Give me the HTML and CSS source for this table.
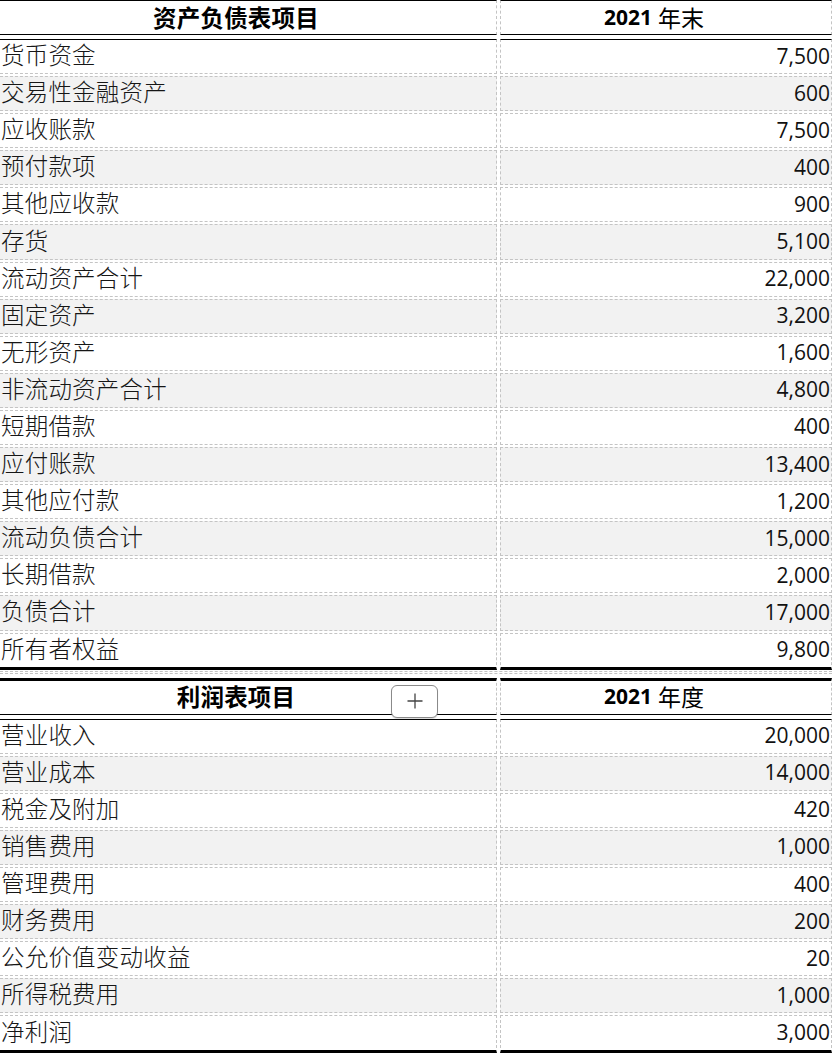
FILE: index.html
```html
<!DOCTYPE html>
<html lang="zh-CN">
<head>
<meta charset="utf-8">
<title>财务报表</title>
<link rel="stylesheet" href="styles.css">
</head>
<body>
<div class="sheet">
  <section class="tbl tbl-top">
    <div class="row head">
      <div class="cell c1"><span class="hd-cn">资产负债表项目</span></div>
      <div class="cell c2"><span class="hd-num">2021</span> <span class="hd-cn hd-light">年末</span></div>
    </div>
    <div class="rows">
      <div class="row first"><div class="cell c1">货币资金</div><div class="cell c2">7,500</div></div>
      <div class="row alt"><div class="cell c1">交易性金融资产</div><div class="cell c2">600</div></div>
      <div class="row"><div class="cell c1">应收账款</div><div class="cell c2">7,500</div></div>
      <div class="row alt"><div class="cell c1">预付款项</div><div class="cell c2">400</div></div>
      <div class="row"><div class="cell c1">其他应收款</div><div class="cell c2">900</div></div>
      <div class="row alt"><div class="cell c1">存货</div><div class="cell c2">5,100</div></div>
      <div class="row"><div class="cell c1">流动资产合计</div><div class="cell c2">22,000</div></div>
      <div class="row alt"><div class="cell c1">固定资产</div><div class="cell c2">3,200</div></div>
      <div class="row"><div class="cell c1">无形资产</div><div class="cell c2">1,600</div></div>
      <div class="row alt"><div class="cell c1">非流动资产合计</div><div class="cell c2">4,800</div></div>
      <div class="row"><div class="cell c1">短期借款</div><div class="cell c2">400</div></div>
      <div class="row alt"><div class="cell c1">应付账款</div><div class="cell c2">13,400</div></div>
      <div class="row"><div class="cell c1">其他应付款</div><div class="cell c2">1,200</div></div>
      <div class="row alt"><div class="cell c1">流动负债合计</div><div class="cell c2">15,000</div></div>
      <div class="row"><div class="cell c1">长期借款</div><div class="cell c2">2,000</div></div>
      <div class="row alt"><div class="cell c1">负债合计</div><div class="cell c2">17,000</div></div>
      <div class="row last"><div class="cell c1">所有者权益</div><div class="cell c2">9,800</div></div>
    </div>
  </section>

  <div class="spacer"></div>

  <section class="tbl tbl-bottom">
    <div class="row head">
      <div class="cell c1"><span class="hd-cn">利润表项目</span><button class="add-btn" type="button" aria-label="添加">
        <svg width="18" height="18" viewBox="0 0 18 18"><path d="M9 1.5V16.5M1.5 9H16.5" stroke="#444" stroke-width="1.3" fill="none"/></svg>
      </button></div>
      <div class="cell c2"><span class="hd-num">2021</span> <span class="hd-cn hd-light">年度</span></div>
    </div>
    <div class="rows">
      <div class="row first"><div class="cell c1">营业收入</div><div class="cell c2">20,000</div></div>
      <div class="row alt"><div class="cell c1">营业成本</div><div class="cell c2">14,000</div></div>
      <div class="row"><div class="cell c1">税金及附加</div><div class="cell c2">420</div></div>
      <div class="row alt"><div class="cell c1">销售费用</div><div class="cell c2">1,000</div></div>
      <div class="row"><div class="cell c1">管理费用</div><div class="cell c2">400</div></div>
      <div class="row alt"><div class="cell c1">财务费用</div><div class="cell c2">200</div></div>
      <div class="row"><div class="cell c1">公允价值变动收益</div><div class="cell c2">20</div></div>
      <div class="row alt"><div class="cell c1">所得税费用</div><div class="cell c2">1,000</div></div>
      <div class="row last"><div class="cell c1">净利润</div><div class="cell c2">3,000</div></div>
    </div>
  </section>
</div>
</body>
</html>
```
FILE: styles.css
```css
html, body {
  margin: 0;
  padding: 0;
  background: #fff;
}
body {
  width: 833px;
  height: 1053px;
  overflow: hidden;
  font-family: "Noto Sans CJK SC", "Noto Sans", sans-serif;
  color: #1a1a1a;
}
.sheet {
  width: 832px;
  display: flex;
  flex-direction: column;
}
.tbl {
  display: flex;
  flex-direction: column;
}
.rows {
  display: flex;
  flex-direction: column;
  gap: 2px;
}
.row {
  display: grid;
  grid-template-columns: 497px 332px;
  column-gap: 3px;
}
.cell {
  box-sizing: border-box;
  height: 35.1px;
  border: 1px dashed #c4c4c4;
  display: flex;
  align-items: center;
  white-space: nowrap;
  line-height: 26px;
}
.cell.c1 {
  border-left: none;
  padding-left: 1px;
  padding-bottom: 5px;
  font-size: 23.5px;
  font-weight: 300;
  letter-spacing: 0.2px;
  color: #161616;
}
.cell.c2 {
  justify-content: flex-end;
  padding-right: 1px;
  padding-bottom: 2px;
  font-family: "Open Sans", "Noto Sans", sans-serif;
  font-size: 21px;
  color: #111;
}
.row.alt .cell {
  background: #f2f2f2;
}
.row.first .cell {
  border-top: 1px solid #000;
}
.row.last .cell {
  border-bottom: 3px solid #000;
  height: 37.1px;
}
.tbl-bottom .row.last .cell {
  height: 38.1px;
}

/* header rows */
.row.head .cell {
  justify-content: center;
  padding-right: 24px;
  padding-bottom: 2px;
  font-weight: 700;
  color: #000;
  border-bottom: 1px solid #000;
}
.row.head .cell.c1 {
  position: relative;
  padding-left: 0;
}
.hd-cn {
  font-family: "Noto Sans CJK SC", sans-serif;
  font-size: 23.5px;
  font-weight: 700;
}
.hd-cn.hd-light {
  font-weight: 400;
  font-size: 23px;
}
.hd-num {
  font-family: "Open Sans", "Noto Sans", sans-serif;
  font-size: 21px;
  font-weight: 700;
  margin-right: 6px;
}
.tbl-top .row.head .cell {
  border-top: 1px solid #000;
  height: 35px;
}
.tbl-top .row.head {
  margin-bottom: 4px;
}
.tbl-bottom .row.head .cell {
  border-top: 3px solid #000;
  height: 37px;
}
.tbl-bottom .row.head {
  margin-bottom: 4px;
}
.spacer {
  height: 1px;
  border-top: 1px dashed #c4c4c4;
  border-bottom: 1px dashed #c4c4c4;
  margin: 1px 0 4px 0;
}

.add-btn {
  position: absolute;
  left: 391px;
  top: 4px;
  width: 47px;
  height: 33px;
  box-sizing: border-box;
  border: 1.5px solid #8a8a8a;
  border-radius: 6px;
  background: #fff;
  padding: 0;
  display: flex;
  align-items: center;
  justify-content: center;
  box-shadow: 0 1px 1px rgba(0,0,0,0.15);
}
```
